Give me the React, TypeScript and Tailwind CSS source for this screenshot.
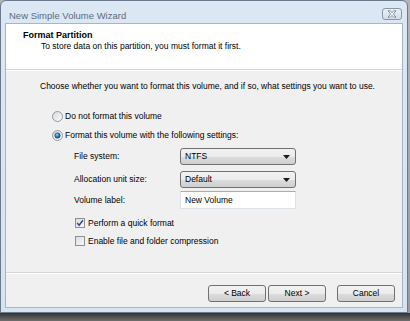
import React from 'react';

function Radio({ checked, id }: { checked?: boolean; id: string }) {
  return (
    <svg width="11" height="11" viewBox="0 0 11 11">
      <defs>
        <linearGradient id={`rb-${id}`} x1="0" y1="0" x2="1" y2="1">
          <stop offset="0" stopColor="#d6d8db" />
          <stop offset="1" stopColor="#fcfcfc" />
        </linearGradient>
        <radialGradient id={`rd-${id}`} cx="0.4" cy="0.35" r="0.7">
          <stop offset="0" stopColor="#8fd0f5" />
          <stop offset="0.6" stopColor="#1a79c0" />
          <stop offset="1" stopColor="#0d3f78" />
        </radialGradient>
      </defs>
      <circle cx="5.5" cy="5.5" r="5" fill={`url(#rb-${id})`} stroke="#8c9196" strokeWidth="0.9" />
      {checked && <circle cx="5.5" cy="5.5" r="2.7" fill={`url(#rd-${id})`} stroke="#21456e" strokeWidth="0.6" />}
    </svg>
  );
}

function Check({ checked, id }: { checked?: boolean; id: string }) {
  return (
    <svg width="10" height="10" viewBox="0 0 10 10">
      <defs>
        <linearGradient id={`cb-${id}`} x1="0" y1="0" x2="1" y2="1">
          <stop offset="0" stopColor="#d8dadd" />
          <stop offset="1" stopColor="#fbfbfb" />
        </linearGradient>
      </defs>
      <rect x="0.5" y="0.5" width="9" height="9" fill={`url(#cb-${id})`} stroke="#8c9196" />
      {checked && (
        <path d="M2.2 5.1 L4.1 7.3 L7.9 2.3" fill="none" stroke="#2f4d8c" strokeWidth="1.5" />
      )}
    </svg>
  );
}

function Combo({ value }: { value: string }) {
  return (
    <div className="w-[116px] h-[17px] flex items-center justify-between pl-[4px] pr-[5px] border border-[#707070] rounded-[3px] bg-[linear-gradient(#f2f2f2_0%,#ebebeb_50%,#dddddd_51%,#cfcfcf_100%)]">
      <span>{value}</span>
      <svg width="7" height="4" viewBox="0 0 7 4">
        <path d="M0 0 H7 L3.5 4 Z" fill="#1a1a1a" />
      </svg>
    </div>
  );
}

function Button({ label }: { label: string }) {
  return (
    <button className="w-[58px] h-[17px] flex items-center justify-center border border-[#707070] rounded-[3px] bg-[linear-gradient(#f2f2f2_0%,#ebebeb_50%,#dddddd_51%,#cfcfcf_100%)] text-black">
      {label}
    </button>
  );
}

export default function App() {
  return (
    <div className="w-[410px] h-[321px] bg-[linear-gradient(#b4b4b4_0px,#9a9a9a_313px,#333333_313px,#6e6e6e_321px)] text-[8.5px] leading-[11px] text-black font-['Liberation_Sans',Arial,sans-serif]">
      <div className="w-[408px] h-[313px] flex flex-col border border-[#6a7a8c] rounded-t-[6px] bg-[linear-gradient(#dce7f4,#d6e3f1)]">
        <div className="h-[22px] flex items-start justify-between">
          <span className="ml-[8px] mt-[9px] text-[9.5px] leading-[11px] text-[#5b6b7c]">New Simple Volume Wizard</span>
          <div className="mt-[7px] mr-[5px] w-[20px] h-[12px] flex items-center justify-center rounded-[3px] border border-[#8797a8] bg-[linear-gradient(#e9eff6,#d2deea)]">
            <svg width="10" height="8" viewBox="0 0 10 8">
              <path
                d="M1 0.8 H3.4 L5 2.6 L6.6 0.8 H9 L6.3 4 L9 7.2 H6.6 L5 5.4 L3.4 7.2 H1 L3.7 4 Z"
                fill="#f4f7fa"
                stroke="#6f7f90"
                strokeWidth="0.8"
              />
            </svg>
          </div>
        </div>
        <div className="mx-[4px] mb-[4px] flex-1 flex flex-col border border-[#a7b6c6]">
          <div className="h-[45px] bg-white pl-[17px] pt-[6px]">
            <p className="text-[9px] font-bold">Format Partition</p>
            <p className="ml-[18px]">To store data on this partition, you must format it first.</p>
          </div>
          <div className="h-px bg-[#d5d5d5]" />
          <div className="h-px bg-white" />
          <div className="flex-1 bg-[#f0f0f0] flex flex-col">
            <p className="ml-[34px] mt-[10px]">
              Choose whether you want to format this volume, and if so, what settings you want to use.
            </p>
            <div className="ml-[46px] mt-[19px] flex flex-col gap-[8px]">
              <div className="h-[11px] flex items-center gap-[2px]">
                <Radio id="a" />
                <span>Do not format this volume</span>
              </div>
              <div className="h-[11px] flex items-center gap-[2px]">
                <Radio id="b" checked />
                <span>Format this volume with the following settings:</span>
              </div>
            </div>
            <div className="ml-[68px] mt-[7px] flex flex-col">
              <div className="h-[17px] flex items-center">
                <span className="w-[106px]">File system:</span>
                <Combo value="NTFS" />
              </div>
              <div className="mt-[6px] h-[17px] flex items-center">
                <span className="w-[106px]">Allocation unit size:</span>
                <Combo value="Default" />
              </div>
              <div className="mt-[3px] h-[18px] flex items-center">
                <span className="w-[106px]">Volume label:</span>
                <div className="w-[116px] h-[18px] flex items-center pl-[4px] bg-white border border-[#dde2e8] border-t-[#abadb3]">
                  New Volume
                </div>
              </div>
              <div className="mt-[9px] ml-[1px] h-[10px] flex items-center gap-[3px]">
                <Check id="c" checked />
                <span>Perform a quick format</span>
              </div>
              <div className="mt-[8px] ml-[1px] h-[10px] flex items-center gap-[3px]">
                <Check id="d" />
                <span>Enable file and folder compression</span>
              </div>
            </div>
            <div className="flex-1" />
            <div className="h-px bg-[#d5d5d5]" />
            <div className="h-px bg-white" />
            <div className="mt-[11px] mb-[5px] mr-[7px] flex justify-end">
              <Button label="< Back" />
              <div className="ml-[2px]">
                <Button label="Next >" />
              </div>
              <div className="ml-[11px]">
                <Button label="Cancel" />
              </div>
            </div>
          </div>
        </div>
      </div>
    </div>
  );
}
